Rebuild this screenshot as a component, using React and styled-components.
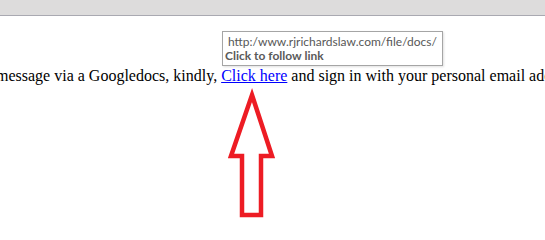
import styled, { createGlobalStyle } from "styled-components";

const GlobalStyle = createGlobalStyle`
  html, body {
    margin: 0;
    padding: 0;
    background: #ffffff;
    overflow: hidden;
  }
`;

const Page = styled.div`
  width: 545px;
  height: 223px;
  position: relative;
  overflow: hidden;
  background: #ffffff;
`;

const TopBar = styled.div`
  height: 15px;
  background: #dddcdc;
  border-bottom: 1px solid #a9a9b1;
`;

const Body = styled.div`
  padding-top: 50px;
`;

const Line = styled.p`
  margin: 0 0 0 -4px;
  white-space: nowrap;
  font-family: "Liberation Serif", "Times New Roman", serif;
  font-size: 16px;
  line-height: 20px;
  color: #000;
`;

const Link = styled.a`
  color: #0000ff;
  text-decoration: underline;
`;

const Tooltip = styled.div`
  position: absolute;
  left: 222px;
  top: 31px;
  width: 214px;
  height: 30px;
  box-sizing: content-box;
  border: 1px solid #a5a5a5;
  background: #ffffff;
  box-shadow: 1px 1px 2px rgba(0, 0, 0, 0.12);
  font-family: Lato, "Open Sans", sans-serif;
  font-size: 12px;
  line-height: 14px;
  color: #575757;
  padding: 3px 0 0 5px;
`;

const TipUrl = styled.div`
  white-space: nowrap;
`;

const TipAction = styled.div`
  font-weight: 700;
  margin-left: -3px;
  color: #5a5a5a;
`;

const Arrow = styled.svg`
  position: absolute;
  left: 0;
  top: 0;
`;

export default function App() {
  return (
    <Page>
      <GlobalStyle />
      <TopBar />
      <Body>
        <Line>
          message via a Googledocs, kindly, <Link href="#">Click here</Link> and sign in with your personal email address
        </Line>
      </Body>
      <Tooltip>
        <TipUrl>http:/www.rjrichardslaw.com/file/docs/</TipUrl>
        <TipAction>Click to follow link</TipAction>
      </Tooltip>
      <Arrow width="545" height="223" viewBox="0 0 545 223">
        <path
          d="M252 95 L272 156 L261 156 L261 215 L242 215 L242 156 L231 156 Z"
          fill="none"
          stroke="#ed1c24"
          strokeWidth="4.5"
          strokeLinejoin="miter"
        />
      </Arrow>
    </Page>
  );
}
